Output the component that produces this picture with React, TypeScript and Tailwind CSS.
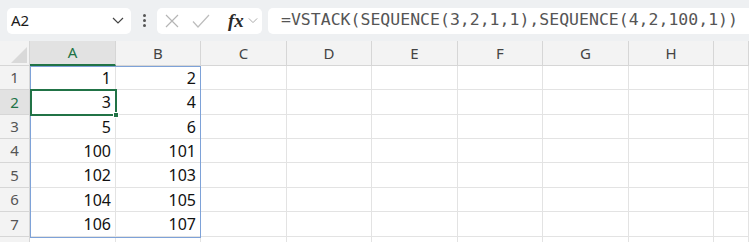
import React from 'react'

const cols = ['A', 'B', 'C', 'D', 'E', 'F', 'G', 'H', '']
const rows = [
  ['1', '2'],
  ['3', '4'],
  ['5', '6'],
  ['100', '101'],
  ['102', '103'],
  ['104', '105'],
  ['106', '107'],
  ['', ''],
]

const ui = { fontFamily: '"Noto Sans", "Open Sans", sans-serif' }

function Chevron({ className }: { className?: string }) {
  return (
    <svg width="12" height="7" viewBox="0 0 12 7" className={className}>
      <path d="M1 1l5 5 5-5" fill="none" stroke="currentColor" strokeWidth="1.2" />
    </svg>
  )
}

export default function App() {
  return (
    <div className="w-[749px] h-[242px] overflow-hidden bg-white" style={ui}>
      {/* toolbar */}
      <div className="h-[41px] bg-[#eef0f2] flex items-center pl-[7px] gap-[6px]">
        <div className="w-[124px] h-[26px] bg-white rounded-[5px] flex items-center justify-between pl-[4px] pr-[7px]">
          <span className="text-[15px] text-[#1a1a1a]">A2</span>
          <Chevron className="text-[#444]" />
        </div>
        <div className="w-[14px] flex flex-col items-center gap-[2px]">
          <span className="w-[3px] h-[3px] rounded-full bg-[#555]" />
          <span className="w-[3px] h-[3px] rounded-full bg-[#555]" />
          <span className="w-[3px] h-[3px] rounded-full bg-[#555]" />
        </div>
        <div className="w-[105px] h-[26px] bg-white rounded-[5px] flex items-center pl-[7px]">
          <svg width="16" height="16" viewBox="0 0 16 16">
            <path d="M2 2l12 12M14 2L2 14" stroke="#b5b5b5" strokeWidth="1.2" fill="none" />
          </svg>
          <svg width="18" height="16" viewBox="0 0 18 16" className="ml-[12px]">
            <path d="M1 8.5l5 5.5 11-12" stroke="#bdbdbd" strokeWidth="1.2" fill="none" />
          </svg>
          <span
            className="ml-[18px] text-[19px] italic font-bold text-[#2a2a2a] leading-none"
            style={{ fontFamily: '"Liberation Serif", serif' }}
          >
            fx
          </span>
          <Chevron className="ml-[4px] text-[#aaa] w-[10px]" />
        </div>
        <div className="flex-1 h-[26px] bg-white rounded-l-[5px] flex items-center pl-[13px]">
          <span
            className="text-[16.5px] text-[#555] whitespace-nowrap"
            style={{ fontFamily: '"DejaVu Sans Mono", "Liberation Mono", monospace' }}
          >
            =VSTACK(SEQUENCE(3,2,1,1),SEQUENCE(4,2,100,1))
          </span>
        </div>
      </div>

      {/* sheet */}
      <div className="relative">
        <div className="grid grid-cols-[30px_86px_85px_86px_85px_86px_85px_86px_85px_35px] grid-rows-[25px_24px_25px_24px_24px_25px_24px_25px_24px]">
          {/* header row */}
          <div className="bg-[#f3f3f3] border-r border-b border-[#d6d6d6] relative overflow-hidden">
            <svg width="30" height="25" className="absolute inset-0">
              <path d="M27 6 L27 22 L11 22 Z" fill="#d9d9d9" />
            </svg>
          </div>
          {cols.map((c, i) => (
            <div
              key={'h' + i}
              className={
                i === 0
                  ? 'bg-[#e2e2e2] border-r border-[#d6d6d6] border-b-2 border-b-[#217346] flex items-center justify-center text-[15px] text-[#217346]'
                  : 'bg-[#f3f3f3] border-r border-b border-[#d6d6d6] flex items-center justify-center text-[15px] text-[#444]'
              }
            >
              {c}
            </div>
          ))}

          {rows.map((r, ri) => (
            <React.Fragment key={'r' + ri}>
              <div
                className={
                  ri === 1
                    ? 'bg-[#e2e2e2] border-r border-b border-[#d6d6d6] flex items-center justify-center text-[15px] text-[#217346]'
                    : 'bg-[#f3f3f3] border-r border-b border-[#d6d6d6] flex items-center justify-center text-[15px] text-[#555]'
                }
              >
                {ri < 7 ? ri + 1 : ''}
              </div>
              {cols.map((_, ci) => (
                <div
                  key={ci}
                  className="border-r border-b border-[#e3e3e3] flex items-center justify-end pr-[4px] text-[16px] text-[#111]"
                >
                  {ci < 2 ? r[ci] : ''}
                </div>
              ))}
            </React.Fragment>
          ))}
        </div>

        {/* spill range outline A1:B7 */}
        <div className="absolute left-[30px] top-[25px] w-[171px] h-[172px] border border-[#7ea2d8] pointer-events-none" />
        {/* active cell A2 */}
        <div className="absolute left-[30px] top-[48px] w-[87px] h-[27px] border-2 border-[#217346] pointer-events-none" />
        <div className="absolute left-[113px] top-[71px] w-[6px] h-[6px] bg-[#217346] border border-white" />
      </div>
    </div>
  )
}
